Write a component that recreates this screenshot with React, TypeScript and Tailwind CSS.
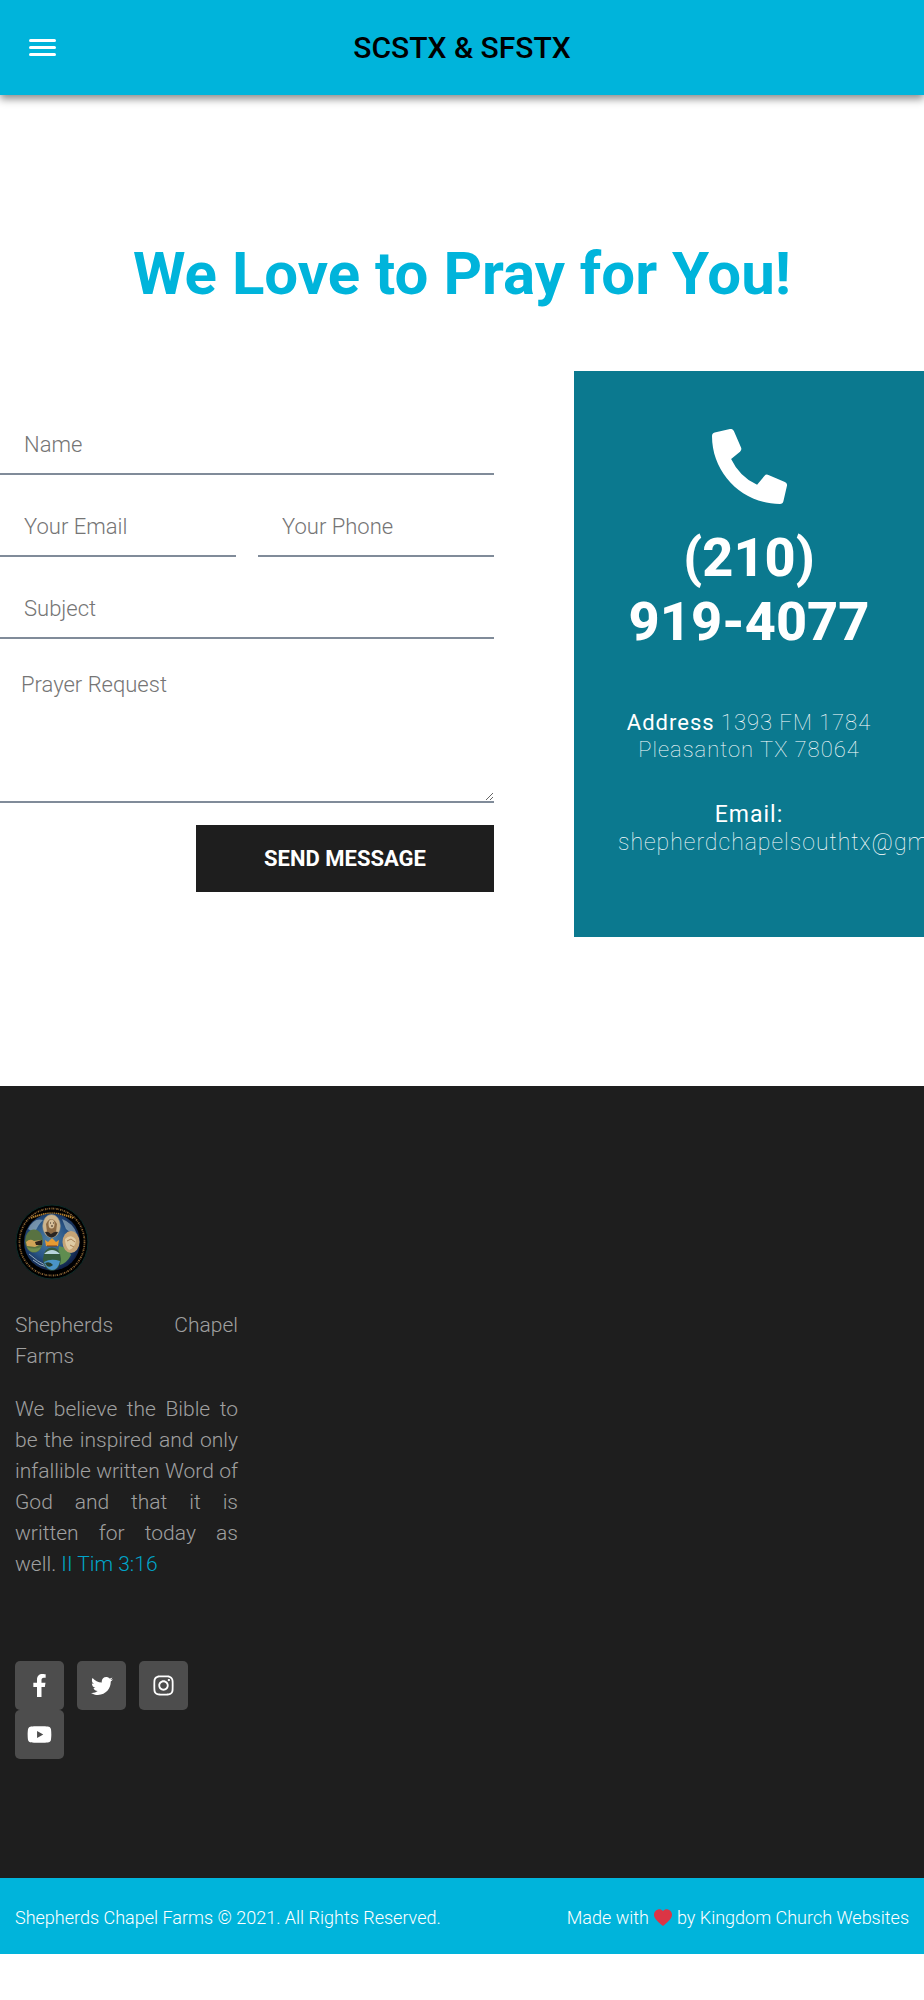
import type { ReactNode } from 'react';
import { FaFacebookF, FaInstagram, FaPhoneAlt, FaTwitter, FaYoutube } from 'react-icons/fa';

const fieldClass =
  'block h-[60px] w-full border-b-2 border-[#808b99] bg-transparent px-6 text-[22px] font-light text-[#333] placeholder:text-[#757575] focus:outline-none';

const socials = [
  { label: 'Facebook', icon: <FaFacebookF size={23} /> },
  { label: 'Twitter', icon: <FaTwitter size={22} /> },
  { label: 'Instagram', icon: <FaInstagram size={23} /> },
  { label: 'YouTube', icon: <FaYoutube size={25} /> },
];

function Field({ name, label, type = 'text' }: { name: string; label: string; type?: string }) {
  return <input type={type} name={name} placeholder={label} aria-label={label} className={fieldClass} />;
}

function Header() {
  return (
    <header className="relative flex h-[95px] items-center bg-[#00b4db] px-[29px] shadow-[0_4px_8px_rgba(0,0,0,0.45)]">
      <button type="button" aria-label="Open menu" className="flex w-[27px] flex-col gap-1">
        <span className="h-[3px] rounded-full bg-white" />
        <span className="h-[3px] rounded-full bg-white" />
        <span className="h-[3px] rounded-full bg-white" />
      </button>
      <span className="flex-1 text-center text-[30px] leading-9 font-medium text-black">SCSTX &amp; SFSTX</span>
      <span className="w-[27px]" />
    </header>
  );
}

function PrayerForm() {
  return (
    <form className="flex flex-1 flex-col gap-[22px] pt-11" onSubmit={(e) => e.preventDefault()}>
      <Field name="name" label="Name" />
      <div className="grid grid-cols-2 gap-[22px]">
        <Field name="email" label="Your Email" type="email" />
        <Field name="phone" label="Your Phone" type="tel" />
      </div>
      <Field name="subject" label="Subject" />
      <textarea
        name="message"
        placeholder="Prayer Request"
        aria-label="Prayer Request"
        className="block h-[142px] w-full resize border-b-2 border-[#808b99] bg-transparent px-[21px] py-[7px] text-[22px] font-light text-[#333] placeholder:text-[#757575] focus:outline-none"
      />
      <button type="submit" className="h-[67px] w-[298px] self-end bg-[#1e1e1e] text-[22px] font-bold text-white">
        SEND MESSAGE
      </button>
    </form>
  );
}

function Strong({ children }: { children: ReactNode }) {
  return <strong className="font-normal">{children}</strong>;
}

function ContactCard() {
  return (
    <aside className="flex w-[350px] flex-col items-center overflow-hidden bg-[#0b798f] px-11 pt-[58px] pb-20 text-center text-white">
      <FaPhoneAlt size={75} />
      <h2 className="mt-[22px] text-[54px] leading-[64px] font-extrabold">
        (210) <span className="whitespace-nowrap">919-4077</span>
      </h2>
      <p className="mt-[55px] text-[22px] leading-[27px] font-thin tracking-[1px]">
        <Strong>Address</Strong> 1393 FM 1784 Pleasanton TX 78064
      </p>
      <p className="mt-[38px] w-full text-[23px] leading-7 font-thin tracking-[1px]">
        <Strong>Email:</Strong>
        <br />
        <a href="mailto:shepherdchapelsouthtx@gmail.com" className="block text-left">
          shepherdchapelsouthtx@gmail.com
        </a>
      </p>
    </aside>
  );
}

function Logo() {
  return (
    <svg viewBox="0 0 74 76" className="h-[76px] w-[74px]" role="img" aria-label="Shepherds Chapel Farms">
      <defs>
        <radialGradient id="globe" cx="45%" cy="45%" r="55%">
          <stop offset="0" stopColor="#4e7fa3" />
          <stop offset="0.6" stopColor="#285486" />
          <stop offset="1" stopColor="#10234a" />
        </radialGradient>
      </defs>
      <ellipse cx="37" cy="38" rx="36" ry="37" fill="#000" stroke="#0b2a27" />
      <ellipse cx="37" cy="38" rx="32.5" ry="33.5" fill="none" stroke="#8a6434" strokeWidth="1.800" strokeDasharray="1.4 0.8 0.6 1" />
      <path d="M16 14Q37 5 58 14" fill="none" stroke="#b27f30" strokeWidth="2" strokeDasharray="1.500 0.6" />
      <ellipse cx="37" cy="38" rx="28" ry="28.5" fill="url(#globe)" />
      <path d="M13 25Q19 13 28 16Q22 22 20 29ZM47 15Q58 19 62 30Q55 29 51 25Z" fill="#a9bfca" opacity="0.6" />
      <path d="M44 42Q54 44 56 51Q52 59 45 61Q42 51 44 42Z" fill="#5f8d50" />
      <path d="M14 50Q23 58 30 61M18 56Q25 62 32 63" fill="none" stroke="#93a9b8" strokeWidth="1" />
      <ellipse cx="36.500" cy="22" rx="9" ry="11.500" fill="#cdb48c" stroke="#6b7f8b" strokeWidth="0.5" />
      <path d="M31 20Q36 10 42 20L41 28Q37 32 32 28Z" fill="#8c6a44" />
      <ellipse cx="36.500" cy="20" rx="3" ry="4.500" fill="#d6bf9a" />
      <path d="M35 19h1M38 19h1M36 22h2" stroke="#3a2a1e" />
      <path d="M30 28Q33 27 36 30Q40 27 43 28Q41 33 36.500 33.500Q32 33 30 28Z" fill="#292421" />
      <ellipse cx="19" cy="37" rx="9" ry="11.500" fill="#587241" />
      <path d="M11 38Q15 34 19 37L26 36V40L20 43L12 42Z" fill="#d1a458" />
      <path d="M20 38L27 36V41H21Z" fill="#2c211c" />
      <path d="M12 43Q19 46 26 43Q24 48 19 48Q14 48 12 43Z" fill="#6f8d4e" />
      <ellipse cx="56" cy="38" rx="8.500" ry="11" fill="#c5a476" />
      <path d="M50 35Q56 29 61 36Q60 44 54 46Q50 42 50 35Z" fill="#dfcba4" />
      <path d="M52 37L56 35L60 38M55 41L59 43" fill="none" stroke="#a88055" />
      <ellipse cx="37" cy="55" rx="9" ry="11.500" fill="#345a3d" />
      <path d="M29 50Q37 42 45 50Z" fill="#b7d4dc" />
      <path d="M29 58Q36 54 45 57Q43 66 37 66Q31 65 29 58Z" fill="#4a94c7" />
      <path d="M30 59Q35 57 38 61Q35 64 32 62Z" fill="#26402f" />
      <path d="M30 36L33 38L37 34L41 38L44 36L43 42H31Z" fill="#e69b32" />
      <path d="M32 42H42" stroke="#7a3d18" />
    </svg>
  );
}

function Heart() {
  return (
    <svg viewBox="0 0 18 17" className="h-[17px] w-[18px]" fill="#dc3545" aria-hidden="true">
      <path d="M9 1.900C10.300.5 12.200 0 14 .4C16.500 1 18 3.200 18 5.700C18 8.800 15.400 11.500 9.700 16.400Q9 17 8.300 16.400C2.600 11.500 0 8.800 0 5.700C0 3.200 1.500 1 4 .4C5.800 0 7.700.5 9 1.900Z" />
    </svg>
  );
}

function Footer() {
  return (
    <footer>
      <div className="bg-[#1e1e1e] px-[15px] pt-[118px] pb-[119px]">
        <div className="w-[223px]">
          <Logo />
          <div className="mt-[30px] space-y-[22px] text-justify text-[21px] leading-[31px] font-light text-[#a0a0a0]">
            <p>Shepherds Chapel Farms</p>
            <p>
              We believe the Bible to be the inspired and only infallible written Word of God and that it is written for
              today as well.{' '}
              <a href="#tim" className="text-[#00a5ca]">
                II Tim 3:16
              </a>
            </p>
          </div>
          <div className="mt-[81px] flex flex-wrap gap-x-[13px]">
            {socials.map((s) => (
              <a
                key={s.label}
                href={`#${s.label.toLowerCase()}`}
                aria-label={s.label}
                className="flex h-[49px] w-[49px] items-center justify-center rounded-[5px] bg-[#4d4d4d] text-white"
              >
                {s.icon}
              </a>
            ))}
          </div>
        </div>
      </div>
      <div className="flex h-[76px] items-center justify-between bg-[#00b4db] px-[15px] pt-0.5 text-[18px] font-light text-white">
        <p>Shepherds Chapel Farms © 2021. All Rights Reserved.</p>
        <p className="flex items-center gap-[5px]">
          Made with <Heart /> by Kingdom Church Websites
        </p>
      </div>
    </footer>
  );
}

export default function App() {
  return (
    <div className="overflow-x-hidden bg-white font-[Roboto,'Liberation_Sans',sans-serif]">
      <Header />
      <main className="pt-[143px] pb-[149px]">
        <h1 className="text-center text-[60px] leading-[72px] font-bold text-[#00b4db]">We Love to Pray for You!</h1>
        <section className="mt-[61px] flex gap-20">
          <PrayerForm />
          <ContactCard />
        </section>
      </main>
      <Footer />
    </div>
  );
}
